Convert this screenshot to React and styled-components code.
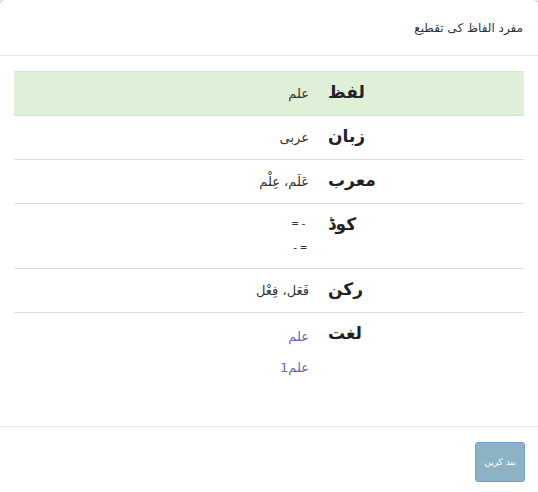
import React from "react";
import styled, { createGlobalStyle } from "styled-components";

const Global = createGlobalStyle`
  html, body { margin: 0; padding: 0; background: #fff; }
  body { font-family: "DejaVu Sans", "Noto Sans", sans-serif; color: #333; overflow: hidden; }
`;

const Modal = styled.div`
  direction: rtl;
  margin: -1px;
  border: 1px solid rgba(0, 0, 0, 0.2);
  border-radius: 6px;
  background: #fff;
  min-height: 494px;
`;

const Header = styled.div`
  padding: 15px;
  height: 25px;
  border-bottom: 1px solid #e5e5e5;
`;

const Title = styled.h4`
  margin: 0;
  font-size: 12px;
  font-weight: normal;
  line-height: 26px;
  color: #333;
`;

const Body = styled.div`
  padding: 15px 14px;
`;

const Table = styled.table`
  width: 100%;
  border-collapse: collapse;
  border-spacing: 0;
  margin-bottom: 20px;
`;

const Row = styled.tr`
  background: ${(p) => (p.$success ? "#dff0d8" : "transparent")};
`;

const Label = styled.th`
  width: 40%;
  text-align: left;
  vertical-align: top;
  padding: 8px;
  border-top: 1px solid #ddd;
  font-size: 17px;
  font-weight: bold;
  line-height: 25px;
  color: #222;
`;

const Value = styled.td`
  text-align: right;
  vertical-align: top;
  padding: 8px 11px 8px 8px;
  border-top: 1px solid #ddd;
  font-size: 13px;
  line-height: 27px;
  color: #333;
`;

const Line = styled.div`
  line-height: ${(p) => p.$lh || 26}px;
  font-size: ${(p) => p.$fs || 13}px;
  letter-spacing: ${(p) => (p.$mono ? "2px" : "normal")};
  color: ${(p) => (p.$link ? "#6a67b4" : "#333")};
  font-family: ${(p) => (p.$mono ? '"DejaVu Sans Mono", monospace' : "inherit")};
`;

const Footer = styled.div`
  padding: 15px 13px 15px 15px;
  border-top: 1px solid #e5e5e5;
  display: flex;
  justify-content: flex-start;
`;

const Button = styled.button`
  width: 50px;
  height: 40px;
  padding: 0;
  background: #8bb3c4;
  border: 1px solid #6aa2e4;
  border-radius: 3px;
  color: #fff;
  font-family: "DejaVu Sans", sans-serif;
  font-size: 9px;
  direction: rtl;
`;

export default function App() {
  return (
    <>
      <Global />
      <Modal>
        <Header>
          <Title>مفرد الفاظ کی تقطیع</Title>
        </Header>
        <Body>
          <Table>
            <tbody>
              <Row $success>
                <Label>لفظ</Label>
                <Value>علم</Value>
              </Row>
              <Row>
                <Label>زبان</Label>
                <Value>عربی</Value>
              </Row>
              <Row>
                <Label>معرب</Label>
                <Value>عَلَم، عِلْم</Value>
              </Row>
              <Row>
                <Label>کوڈ</Label>
                <Value>
                  <Line $mono $fs={11} $lh={24}>-=</Line>
                  <Line $mono $fs={11} $lh={24}>=-</Line>
                </Value>
              </Row>
              <Row>
                <Label>رکن</Label>
                <Value>فَعَل، فِعْل</Value>
              </Row>
              <Row>
                <Label>لغت</Label>
                <Value>
                  <Line $link $lh={31}>علم</Line>
                  <Line $link $lh={31}>علم1</Line>
                </Value>
              </Row>
            </tbody>
          </Table>
        </Body>
        <Footer>
          <Button>بند کریں</Button>
        </Footer>
      </Modal>
    </>
  );
}
